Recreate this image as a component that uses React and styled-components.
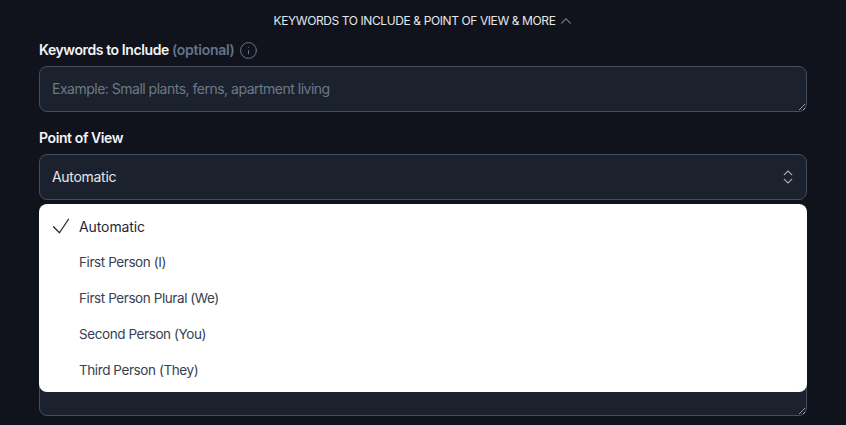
import styled, { createGlobalStyle } from 'styled-components';
import { ChevronUp, ChevronsUpDown, Info } from 'lucide-react';
import { HiOutlineCheck } from 'react-icons/hi2';

const GlobalStyle = createGlobalStyle`
  html, body {
    margin: 0;
    height: 100%;
    overflow: hidden;
    background: #10131c;
  }
  body {
    font-family: Inter, "Noto Sans", sans-serif;
  }
`;

const Page = styled.div`
  height: 425px;
  overflow: hidden;
  padding: 0 39px;
  background: #10131c;
`;

const Toggle = styled.button`
  display: flex;
  align-items: center;
  justify-content: center;
  gap: 2px;
  box-sizing: border-box;
  width: 100%;
  height: 41px;
  padding: 0 0 0 3px;
  border: 0;
  background: none;
  color: #e5e7eb;
  font: 400 12px/16px Inter, sans-serif;
  letter-spacing: -0.4px;
  text-transform: uppercase;
  svg {
    color: #6b7280;
  }
`;

const Field = styled.div`
  margin-bottom: 17px;
`;

const Label = styled.label`
  display: flex;
  align-items: center;
  gap: 4px;
  height: 18px;
  margin-bottom: 7px;
  color: #f3f4f6;
  font-size: 14px;
  font-weight: 600;
  letter-spacing: -0.4px;
  line-height: 18px;
  svg {
    color: #64748b;
  }
`;

const Optional = styled.span`
  margin-left: -1px;
  color: #64748b;
  letter-spacing: -0.25px;
`;

const TextArea = styled.textarea`
  display: block;
  box-sizing: border-box;
  width: 100%;
  height: ${({ $height }) => $height}px;
  padding: 12px;
  border: 1px solid #434d5c;
  border-radius: 8px;
  background: #1b222d;
  color: #e5e7eb;
  font: 400 14px/20px Inter, sans-serif;
  letter-spacing: -0.5px;
  outline: none;
  &::placeholder {
    color: #6b7888;
    opacity: 1;
  }
`;

const SelectWrap = styled.div`
  position: relative;
`;

const SelectButton = styled.button`
  display: flex;
  align-items: center;
  justify-content: space-between;
  box-sizing: border-box;
  width: 100%;
  height: 46px;
  padding: 0 9px 0 12px;
  border: 1px solid #434d5c;
  border-radius: 8px;
  background: #1b222d;
  color: #e5e7eb;
  font: 400 14px/20px Inter, sans-serif;
  letter-spacing: -0.3px;
  svg {
    color: #9ca3af;
  }
`;

const Menu = styled.ul`
  position: absolute;
  top: 50px;
  left: 0;
  right: 0;
  z-index: 10;
  margin: 0;
  padding: 4px 0;
  list-style: none;
  border-radius: 8px;
  background: #ffffff;
`;

const Option = styled.li`
  display: flex;
  align-items: center;
  height: 36px;
  padding-left: 40px;
  position: relative;
  color: ${({ $selected }) => ($selected ? '#1f2937' : '#374151')};
  font-size: ${({ $selected }) => ($selected ? '14px' : '13.5px')};
  letter-spacing: ${({ $selected }) => ($selected ? '-0.1px' : '-0.42px')};
  svg {
    position: absolute;
    left: 10px;
    top: 6px;
    stroke-width: 1.25;
  }
`;

const options = [
  'Automatic',
  'First Person (I)',
  'First Person Plural (We)',
  'Second Person (You)',
  'Third Person (They)',
];

const App = () => {
  return (
    <Page>
      <GlobalStyle />
      <Toggle type="button">
        Keywords to Include &amp; Point of View &amp; More
        <ChevronUp size={18} strokeWidth={1.5} />
      </Toggle>
      <Field>
        <Label>
          Keywords to Include <Optional>(optional)</Optional>
          <Info size={19} strokeWidth={1.25} />
        </Label>
        <TextArea $height={46} placeholder="Example: Small plants, ferns, apartment living" />
      </Field>
      <Field>
        <Label>Point of View</Label>
        <SelectWrap>
          <SelectButton type="button">
            Automatic
            <ChevronsUpDown size={18} strokeWidth={1.5} />
          </SelectButton>
          <Menu>
            {options.map((option, index) => (
              <Option key={option} $selected={index === 0}>
                {index === 0 && <HiOutlineCheck size={24} />}
                {option}
              </Option>
            ))}
          </Menu>
        </SelectWrap>
      </Field>
      <Field>
        <Label>Tone</Label>
        <TextArea $height={174} />
      </Field>
    </Page>
  );
};

export default App;
